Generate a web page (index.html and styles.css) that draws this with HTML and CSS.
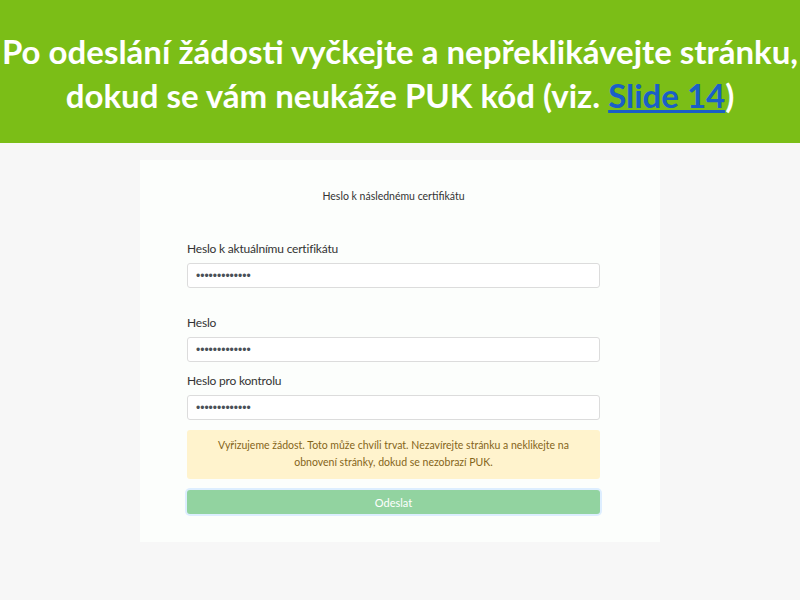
FILE: index.html
```html
<!DOCTYPE html>
<html lang="cs">
<head>
    <meta charset="UTF-8">
    <meta name="viewport" content="width=device-width, initial-scale=1.0">
    <title>Heslo k následnému certifikátu</title>
    <link rel="stylesheet" href="styles.css">
</head>
<body>
    <div class="banner">
        <p class="banner-text">Po odeslání žádosti vyčkejte a nepřeklikávejte stránku,<br>dokud se vám neukáže PUK kód (viz. <a href="#slide14">Slide 14</a>)</p>
    </div>

    <div class="page">
        <div class="card">
            <h2 class="card-title">Heslo k následnému certifikátu</h2>
            <form class="cert-form">
                <div class="field field-first">
                    <label for="current">Heslo k aktuálnímu certifikátu</label>
                    <input type="password" id="current" value="aaaaaaaaaaaaa">
                </div>
                <div class="field field-gap">
                    <label for="pass">Heslo</label>
                    <input type="password" id="pass" value="aaaaaaaaaaaaa">
                </div>
                <div class="field">
                    <label for="pass2">Heslo pro kontrolu</label>
                    <input type="password" id="pass2" value="aaaaaaaaaaaaa">
                </div>
                <div class="alert">Vyřizujeme žádost. Toto může chvíli trvat. Nezavírejte stránku a neklikejte na obnovení stránky, dokud se nezobrazí PUK.</div>
                <button type="submit" class="btn-submit" disabled>Odeslat</button>
            </form>
        </div>
    </div>
</body>
</html>
```

FILE: styles.css
```css
body {
    margin: 0;
    background-color: #f7f7f7;
    font-family: Lato, "Open Sans", sans-serif;
    color: #333;
}
.banner {
    background-color: #7bbe17;
    height: 143px;
    display: flex;
    align-items: center;
    overflow: hidden;
}
.banner-text {
    width: 100%;
    margin: 0;
    padding-top: 2px;
    text-align: center;
    white-space: nowrap;
    color: #ffffff;
    font-weight: bold;
    font-size: 33px;
    line-height: 44px;
}
.banner-text a {
    color: #1a5fc8;
}
.page {
    padding-top: 17px;
    padding-bottom: 59px;
}
.card {
    width: 413px;
    margin: 0 auto;
    padding: 28px 60px 28px 47px;
    background-color: #fcfefc;
}
.card-title {
    margin: 0;
    text-align: center;
    font-size: 10.5px;
    font-weight: normal;
    line-height: 16px;
}
.field label {
    display: block;
    font-size: 12px;
    letter-spacing: -0.2px;
    line-height: 18px;
    margin-bottom: 5px;
}
.field input {
    display: block;
    box-sizing: border-box;
    width: 100%;
    height: 25px;
    padding: 0 8px;
    border: 1px solid #dcdcdc;
    border-radius: 3px;
    background: #ffffff;
    color: #495057;
    font-size: 12px;
}
.field {
    margin-top: 10px;
}
.field-first {
    margin-top: 36px;
}
.field-gap {
    margin-top: 26px;
}
.alert {
    margin-top: 10px;
    padding: 7px 20px 8px;
    background-color: #fff3cd;
    color: #85651a;
    border-radius: 3px;
    text-align: center;
    font-size: 10.5px;
    line-height: 17px;
}
.btn-submit {
    display: block;
    width: 100%;
    height: 24px;
    margin-top: 11px;
    border: none;
    border-radius: 3px;
    background-color: #92d3a0;
    box-shadow: 0 0 0 2px #ddeeff;
    color: #ffffff;
    font-family: inherit;
    font-size: 11px;
}
```
